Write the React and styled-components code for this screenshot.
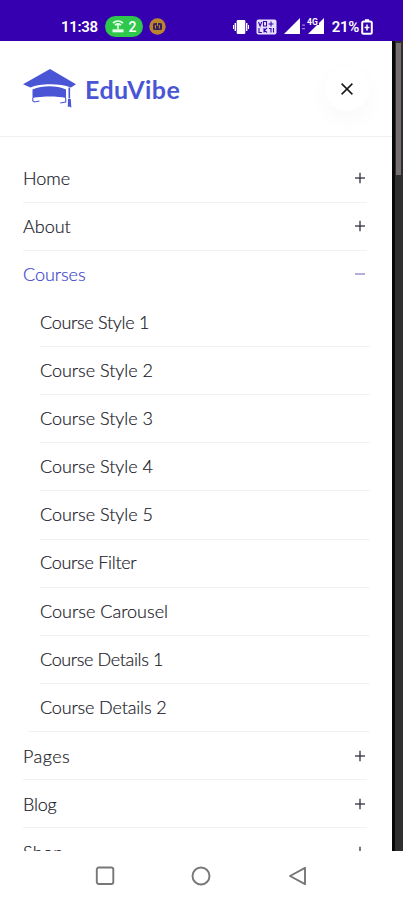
import React, { useState } from "react";
import styled, { createGlobalStyle } from "styled-components";

const courses = [
  { title: "Course Style 1", spacing: -0.3 },
  { title: "Course Style 2", spacing: -0.02 },
  { title: "Course Style 3", spacing: -0.02 },
  { title: "Course Style 4", spacing: -0.02 },
  { title: "Course Style 5", spacing: -0.02 },
  { title: "Course Filter", spacing: -0.28 },
  { title: "Course Carousel", spacing: 0.02 },
  { title: "Course Details 1", spacing: -0.36 },
  { title: "Course Details 2", spacing: -0.15 },
];

const menu = [
  { title: "Home", spacing: 0 },
  { title: "About", spacing: 0 },
  { title: "Courses", spacing: -0.05, children: courses },
  { title: "Pages", spacing: 0.45 },
  { title: "Blog", spacing: -0.2 },
  { title: "Shop", spacing: 0.3 },
];

const StatusBar = () => (
  <StatusContainer>
    <Clock>11:38</Clock>
    <HotspotPill>
      <svg width="12" height="13" viewBox="0 0 12 13" fill="none" stroke="#e9ffe9">
        <path d="M1 3.2C4 .4 8 .4 11 3.2M3 5.2c2-1.6 4-1.6 6 0" strokeWidth="1.7" />
        <path d="M6 5v4" strokeWidth="1.6" />
        <path d="M.5 10.8h11" strokeWidth="3" />
      </svg>
      <span>2</span>
    </HotspotPill>
    <AppBadge>
      <svg width="17" height="17" viewBox="0 0 17 17">
        <circle cx="8.5" cy="8.5" r="8.2" fill="#bd8430" />
        <rect x="4" y="5" width="9" height="7" rx="1.6" fill="#35205f" />
        <path d="M6.4 7v3.5M10.4 7v3.5M8.5 5v3" stroke="#bd8430" strokeWidth="1.1" />
      </svg>
    </AppBadge>
    <StatusIcons>
      <svg width="16" height="16" viewBox="0 0 16 16" fill="#fff">
        <rect x="3.7" y="1" width="8.600" height="14" rx="1.2" />
        <path d="M1.6 4h1.4v8H1.6zM0 6h1v4H0zM13 4h1.400v8H13zM15 6h1v4h-1z" />
      </svg>
      <svg width="21" height="16" viewBox="0 0 21 16">
        <rect x=".5" y=".5" width="20" height="15" rx="2" fill="#e7e1ff" />
        <path
          d="M2.5 3l1.6 4 1.6-4M7.5 2.5h3v4.5h-3zM12.500 5h5M15 2.500v5M3 9v4.5h3M8 9v4.5M11 9l-2.6 2.3L11 13.500M13 9.500h2v4M17.500 9v4.500"
          fill="none"
          stroke="#3a05b0"
          strokeWidth="1.1"
        />
      </svg>
      <svg width="41" height="17" viewBox="0 0 41 17" fill="#fff">
        <path d="M0 16L16 0v16zM24 16L40 0v16z" />
        <path d="M18 6.500h3v1.300h-3zM18 10h3v1.300h-3z" opacity=".5" />
        <path d="M23 0h12v7H23z" fill="#3600b0" />
        <text x="23" y="7" fontSize="8.500" fontWeight="700" fontFamily="Roboto, sans-serif">
          4G
        </text>
      </svg>
      <Percent>21%</Percent>
      <svg width="12" height="16" viewBox="0 0 12 16" fill="none" stroke="#fff">
        <path d="M4 1.200h4" strokeWidth="2" />
        <rect x="1.200" y="2.400" width="9.600" height="12.400" rx="1.500" strokeWidth="2" />
        <path d="M6 5.500v6M3.600 8.500h4.800" strokeWidth="1.500" />
      </svg>
    </StatusIcons>
  </StatusContainer>
);

const Logo = () => (
  <LogoWrapper>
    <svg width="54" height="40" viewBox="0 0 54 40" fill="#4a55d6">
      <path d="M27 0L53 15.200 48 18.500C37 14.200 17 14.200 7.500 18.500L0 15.200z" />
      <path d="M9.500 20.500C20 16.200 33 16.200 43 20.500V29C34 27 20 27 9.500 29z" />
      <path d="M9.800 29v3l2.500 1.200M42.700 29v4l-5.500 1M12.500 32.800l4-.8" fill="none" stroke="#4a55d6" strokeWidth="1.100" />
      <path d="M45.500 18.500h1.600v11h-1.600zM45 30h2.800l.5 8.700-2-1.300-1.500.6z" />
    </svg>
    <Brand>EduVibe</Brand>
  </LogoWrapper>
);

const ToggleIcon = ({ open }) => (
  <svg width="10" height="12" viewBox="0 0 10 12" fill="none" strokeWidth={open ? 1.8 : 1.3} stroke={open ? "#aaa5dd" : "#30303f"}>
    <path d="M0 6h10" />
    {!open && <path d="M5 .8v10.400" />}
  </svg>
);

const App = () => {
  const [opened, setOpened] = useState("Courses");

  return (
    <>
      <GlobalStyle />
      <Phone>
        <StatusBar />
        <Page>
          <Panel>
            <Header>
              <Logo />
              <CloseButton aria-label="Close">
                <svg width="12" height="12" viewBox="0 0 12 12" stroke="#181818" strokeWidth="1.500">
                  <path d="M.6.6l10.800 10.800M11.400.6L.6 11.400" />
                </svg>
              </CloseButton>
            </Header>
            <Menu>
              {menu.map((item) => {
                const isOpen = opened === item.title;
                return (
                  <li key={item.title}>
                    <MenuRow $open={isOpen} onClick={() => setOpened(isOpen ? "" : item.title)}>
                      <Label $spacing={item.spacing}>{item.title}</Label>
                      <ToggleIcon open={isOpen} />
                    </MenuRow>
                    {isOpen && item.children && (
                      <SubMenu>
                        {item.children.map((child) => (
                          <SubRow key={child.title}>
                            <Label $spacing={child.spacing}>{child.title}</Label>
                          </SubRow>
                        ))}
                      </SubMenu>
                    )}
                  </li>
                );
              })}
            </Menu>
          </Panel>
          <Backdrop>
            <ScrollThumb />
          </Backdrop>
        </Page>
        <NavBar>
          <svg width="20" height="20" viewBox="0 0 20 20">
            <rect x="1.800" y="1.500" width="16.500" height="16.500" rx="2" />
          </svg>
          <svg width="20" height="20" viewBox="0 0 20 20">
            <circle cx="10" cy="10" r="8.500" />
          </svg>
          <svg width="20" height="20" viewBox="0 0 20 20">
            <path d="M17 1.800v16.400L2 10z" strokeLinejoin="round" />
          </svg>
        </NavBar>
      </Phone>
    </>
  );
};

export default App;

const GlobalStyle = createGlobalStyle`
  * {
    box-sizing: border-box;
  }

  body {
    margin: 0;
    background: #fff;
  }

  svg {
    display: block;
    flex-shrink: 0;
  }
`;

const Phone = styled.div`
  display: flex;
  flex-direction: column;
  width: 403px;
  height: 900px;
  overflow: hidden;
  background: #fff;
  font-family: "Lato", sans-serif;
`;

const StatusContainer = styled.div`
  display: flex;
  align-items: center;
  height: 41px;
  flex-shrink: 0;
  padding: 12px 30px 0 61px;
  background: #3600b0;
  color: #fff;
  font-family: "Roboto", sans-serif;
  font-size: 15px;
  font-weight: 600;
`;

const Clock = styled.div`
  width: 44px;
  letter-spacing: -0.3px;
`;

const HotspotPill = styled.div`
  display: flex;
  align-items: center;
  justify-content: center;
  gap: 5px;
  width: 38px;
  height: 21px;
  border-radius: 11px;
  background: #2fc84d;
  font-size: 14px;
  font-weight: 500;
`;

const AppBadge = styled.div`
  margin-left: 6px;
`;

const StatusIcons = styled.div`
  display: flex;
  align-items: center;
  margin-left: auto;
  gap: 7px;

  & > svg:last-child {
    margin-left: -5px;
  }
`;

const Percent = styled.div`
  font-size: 15px;
  letter-spacing: -0.3px;
`;

const Page = styled.div`
  display: flex;
  height: 810px;
  flex-shrink: 0;
  overflow: hidden;
`;

const Panel = styled.div`
  width: 392px;
  background: #fff;
`;

const Header = styled.div`
  display: flex;
  align-items: center;
  justify-content: space-between;
  height: 96px;
  padding: 0 23px;
  border-bottom: 1px solid #f1f1f1;
`;

const LogoWrapper = styled.div`
  display: flex;
  align-items: center;
  gap: 8px;
`;

const Brand = styled.div`
  font-size: 25px;
  font-weight: 700;
  line-height: 30px;
  letter-spacing: 0.45px;
  color: #4a55d6;
`;

const CloseButton = styled.button`
  display: flex;
  align-items: center;
  justify-content: center;
  width: 44px;
  height: 44px;
  padding: 0;
  border: 0;
  border-radius: 50%;
  background: #fff;
  box-shadow: 0 8px 24px rgba(0, 0, 0, 0.03);
  cursor: pointer;
`;

const Menu = styled.ul`
  list-style: none;
  margin: 0;
  padding: 17.500px 25px 0 23px;
`;

const MenuRow = styled.div`
  display: flex;
  align-items: center;
  justify-content: space-between;
  height: 48.150px;
  padding-right: 2px;
  border-bottom: 1px solid ${({ $open }) => ($open ? "transparent" : "#f2f2f2")};
  color: ${({ $open }) => ($open ? "#4048cc" : "#20202a")};
  cursor: pointer;
`;

const SubMenu = styled.ul`
  list-style: none;
  margin: 0 -3px 0 17px;
  padding: 0;
`;

const SubRow = styled.li`
  display: flex;
  align-items: center;
  height: 48.150px;
  padding-bottom: 1.500px;
  border-bottom: 1px solid #f2f2f2;
  color: #20202a;

  &:last-child {
    margin-left: -12px;
    padding-left: 12px;
  }
`;

const Label = styled.span`
  font-size: 18px;
  font-weight: 300;
  line-height: 24px;
  white-space: nowrap;
  letter-spacing: ${({ $spacing }) => $spacing}px;
  -webkit-text-stroke: 0.2px currentColor;
`;

const Backdrop = styled.div`
  flex: 1;
  padding: 2px 2px 0 1px;
  border-left: 3px solid #080808;
  background: #302e2e;
`;

const ScrollThumb = styled.div`
  height: 132px;
  background: #75706f;
`;

const NavBar = styled.div`
  display: flex;
  align-items: center;
  justify-content: center;
  gap: 76.500px;
  flex: 1;
  padding-right: 1px;

  svg {
    fill: none;
    stroke: #777;
    stroke-width: 1.900px;
  }
`;
